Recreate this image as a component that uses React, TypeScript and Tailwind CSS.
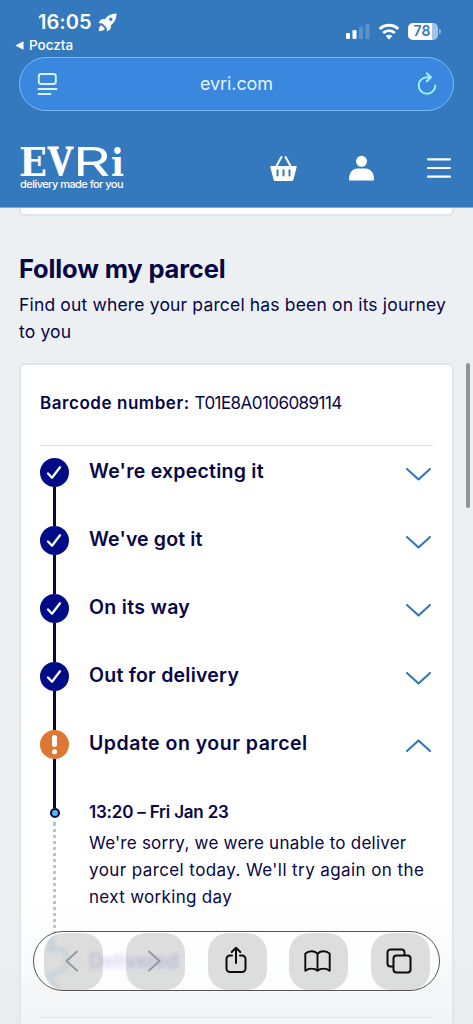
import { type ReactNode } from "react";

const STEPS = [
  { title: "We're expecting it", tracking: "tracking-[0.240px]" },
  { title: "We've got it", tracking: "tracking-[0.150px]" },
  { title: "On its way", tracking: "tracking-[0.320px]" },
  { title: "Out for delivery", tracking: "tracking-[0.230px]" },
];

function StatusBar() {
  return (
    <div className="flex h-[54px] items-start justify-between pl-[15px] pr-[32px] text-white">
      <div>
        <div className="flex items-center gap-[6px] pl-[23px] pt-[9px]">
          <span className="text-[20px] font-semibold leading-[26px] tracking-[0.050px]">16:05</span>
          <svg className="h-[19px] w-[19px]" viewBox="0 0 19 19" fill="currentColor">
            <path fillRule="evenodd" d="M18.5.5c-5-.2-9 2-11.500 5.500L3 6.600.5 10l4 .6L8.500 14.500l.6 4L12.500 16l.6-4C16.600 9.500 18.700 5.500 18.500.5ZM12.800 4.500a1.700 1.700 0 1 1 0 3.400 1.700 1.700 0 0 1 0-3.400Z" />
            <path d="M3.500 12.200C1.500 13 .8 15 .8 18.200c3.200 0 5.200-.7 6-2.700Z" />
          </svg>
        </div>
        <div className="flex items-center gap-[5px] text-[13.500px] font-medium leading-[20px]">
          <svg className="h-[9px] w-[9px]" viewBox="0 0 9 9" fill="currentColor">
            <path d="M8.500.3v8.400L.3 4.500Z" />
          </svg>
          Poczta
        </div>
      </div>
      <div className="flex items-center gap-[8px] pt-[22px]">
        <svg className="h-[18px] w-[24px]" viewBox="0 0 24 18" fill="currentColor">
          <rect x="0" y="11" width="4" height="6" rx="1.200" />
          <rect x="6.500" y="8" width="4" height="9" rx="1.200" />
          <rect x="13" y="5" width="4" height="12" rx="1.200" opacity=".2" />
          <rect x="19.500" y="2" width="4" height="15" rx="1.200" opacity=".2" />
        </svg>
        <svg className="h-[18px] w-[22px]" viewBox="0 0 22 18" fill="none" stroke="currentColor" strokeWidth="2.900">
          <path d="M1.700 7a13.300 13.300 0 0 1 18.600 0" />
          <path d="M5.200 11a8.300 8.300 0 0 1 11.600 0" />
          <path d="M11 17.500l-3.300-3.400a4.500 4.500 0 0 1 6.600 0Z" fill="currentColor" stroke="none" />
        </svg>
        <div className="flex items-center gap-[1px]">
          <div className="flex h-[17px] w-[30px] items-center justify-center rounded-[5px] bg-linear-to-r from-white from-80% to-[#a4c4e4] to-80% pr-[2px] text-[14px] font-semibold leading-none text-[#3478be]">
            78
          </div>
          <div className="h-[5px] w-[2px] rounded-r-full bg-[#8db6df]" />
        </div>
      </div>
    </div>
  );
}

function AddressBar() {
  return (
    <div className="mx-[19px] mt-[3px] flex h-[54px] items-center justify-between rounded-full border border-[#75bdf7] bg-[#3a87df] pl-[17px] pr-[16px]">
      <svg className="h-[24px] w-[21px]" viewBox="0 0 21 24" fill="none" stroke="#d9f4ff" strokeWidth="1.900" strokeLinecap="round">
        <rect x="1.800" y="2" width="17" height="10" rx="2.200" />
        <path d="M1.500 17h18M1.500 22h12" />
      </svg>
      <span className="pr-[2px] text-[18px] leading-none tracking-[-0.100px] text-[#e4f3ff]">evri.com</span>
      <svg className="h-[24px] w-[20px]" viewBox="0 0 20 24" fill="none" stroke="#9ff0fb" strokeWidth="2" strokeLinecap="round" strokeLinejoin="round">
        <path d="M18.300 13.500a8.300 8.300 0 1 1-8.300-8.300h3.500" />
        <path d="M9.800 1.200l4 4-4 4.100" />
      </svg>
    </div>
  );
}

function Logo() {
  return (
    <svg className="h-[60px] w-[106px] overflow-visible" viewBox="0 0 106 60" fill="#fff">
      <text x="-1" y="37.500" fontFamily="DejaVu Serif, serif" fontWeight="700" fontSize="40" textLength="28" lengthAdjust="spacingAndGlyphs">E</text>
      <text x="27.500" y="37" fontFamily="Liberation Serif, serif" fontWeight="700" fontSize="43" textLength="26" lengthAdjust="spacingAndGlyphs" stroke="#fff" strokeWidth="1">V</text>
      <text x="53" y="37.500" fontFamily="Inter, sans-serif" fontWeight="400" fontSize="40" textLength="37.500" lengthAdjust="spacingAndGlyphs">R</text>
      <text x="91" y="37.500" fontFamily="DejaVu Serif, serif" fontWeight="700" fontSize="38" textLength="13" lengthAdjust="spacingAndGlyphs">i</text>
      <text x="0" y="49.500" fontFamily="Inter, sans-serif" fontWeight="500" fontSize="11" textLength="103.500">delivery made for you</text>
    </svg>
  );
}

function SiteHeader() {
  return (
    <div className="flex h-[95px] items-center justify-between pl-5 pr-[21px] pt-[18px] text-white">
      <Logo />
      <div className="flex items-center gap-[51px] pt-[1px]">
        <svg className="h-[26px] w-[27px]" viewBox="0 0 27 26" fill="currentColor">
          <path fillRule="evenodd" d="M1 11h25c.5 0 .8.400.7.900l-3.200 12.600c-.2.900-.8 1.500-1.700 1.500H5.200c-.9 0-1.500-.6-1.700-1.500L.3 11.900c-.1-.5.200-.9.700-.9Zm5.500 4.200v5.400a1 1 0 0 0 2 0v-5.400a1 1 0 0 0-2 0Zm6 0v5.400a1 1 0 0 0 2 0v-5.400a1 1 0 0 0-2 0Zm6 0v5.400a1 1 0 0 0 2 0v-5.400a1 1 0 0 0-2 0Z" />
          <path d="M6.500 11l5-9M20.500 11l-5-9" stroke="currentColor" strokeWidth="2" strokeLinecap="round" />
        </svg>
        <svg className="h-[26px] w-[27px]" viewBox="0 0 27 26" fill="currentColor">
          <circle cx="13.500" cy="6.300" r="5.500" />
          <path d="M1 24.500C1 17.500 4.500 13.500 9.500 13.500h8C22.500 13.500 26 17.500 26 24.500c0 .7-.4 1-1 1H2c-.6 0-1-.3-1-1Z" />
        </svg>
        <svg className="h-[22px] w-[26px]" viewBox="0 0 26 22" stroke="currentColor" strokeWidth="2.200" strokeLinecap="round">
          <path d="M2 2.300h22M2 11h22M2 19.700h22" />
        </svg>
      </div>
    </div>
  );
}

function Chevron({ up = false }: { up?: boolean }) {
  return (
    <svg className="h-[16px] w-[27px]" viewBox="0 0 27 16" fill="none" stroke="#2f78bf" strokeWidth="2.100" strokeLinecap="round" strokeLinejoin="round">
      <path d={up ? "M2 13l11.500-10.500L25 13" : "M2 3l11.500 10.500L25 3"} />
    </svg>
  );
}

function Step({ icon, title, tracking, up = false }: { icon: ReactNode; title: string; tracking: string; up?: boolean }) {
  return (
    <div className="flex h-[68px]">
      <div className="flex w-[29px] flex-col items-center">
        {icon}
        <div className="w-[2.500px] flex-1 bg-[#07073f]" />
      </div>
      <div className="flex h-[29px] flex-1 items-center justify-between pl-5 pr-[1px]">
        <h3 className={`pb-[3px] text-[19.500px] font-semibold leading-[26px] ${tracking}`}>{title}</h3>
        <div className="pt-[2px]"><Chevron up={up} /></div>
      </div>
    </div>
  );
}

function Tick() {
  return (
    <svg className="h-[29px] w-[29px] shrink-0" viewBox="0 0 29 29">
      <circle cx="14.500" cy="14.500" r="14.500" fill="#000b86" />
      <path d="M8 15.500l4 4.200L20 9.300" fill="none" stroke="#fff" strokeWidth="2.300" strokeLinecap="round" strokeLinejoin="round" />
    </svg>
  );
}

function Alert() {
  return (
    <svg className="h-[29px] w-[29px] shrink-0" viewBox="0 0 29 29">
      <circle cx="14.500" cy="14.500" r="14.500" fill="#dc7832" />
      <path d="M14.500 7.500v7" stroke="#fff" strokeWidth="5" strokeLinecap="round" />
      <circle cx="14.500" cy="21.800" r="2.500" fill="#fff" />
    </svg>
  );
}

function ToolButton({ children }: { children: ReactNode }) {
  return (
    <button className="flex h-[57px] w-[59px] items-center justify-center rounded-[20px] bg-black/13 pr-[3px]">{children}</button>
  );
}

function Toolbar() {
  return (
    <div className="absolute left-[33px] top-[931px] flex h-[60px] w-[407px] items-center justify-between rounded-full border border-[#555] bg-white/75 pl-[10px] pr-[9px] backdrop-blur-[2px]">
      <ToolButton>
        <svg className="h-[22px] w-[14px]" viewBox="0 0 14 22" fill="none" stroke="#98989d" strokeWidth="2" strokeLinecap="round" strokeLinejoin="round">
          <path d="M12 1.500L1.500 11 12 20.500" />
        </svg>
      </ToolButton>
      <ToolButton>
        <svg className="h-[22px] w-[14px]" viewBox="0 0 14 22" fill="none" stroke="#98989d" strokeWidth="2" strokeLinecap="round" strokeLinejoin="round">
          <path d="M2 1.500L12.500 11 2 20.500" />
        </svg>
      </ToolButton>
      <ToolButton>
        <svg className="mb-[2px] h-[28px] w-[22px]" viewBox="0 0 22 28" fill="none" stroke="#0b0b0b" strokeWidth="2" strokeLinecap="round" strokeLinejoin="round">
          <path d="M7 9.500H5a3.500 3.500 0 0 0-3.500 3.500v9.500A3.500 3.500 0 0 0 5 26h12a3.500 3.500 0 0 0 3.500-3.500V13A3.500 3.500 0 0 0 17 9.500h-2" />
          <path d="M11 17V1.800M6.700 6L11 1.700 15.300 6" />
        </svg>
      </ToolButton>
      <ToolButton>
        <svg className="h-[22px] w-[27px]" viewBox="0 0 27 22" fill="none" stroke="#0b0b0b" strokeWidth="1.900" strokeLinejoin="round">
          <path d="M13.500 4C12 2 10 1.200 7.500 1.200S3 2 1.300 3.700V20.700C3 19.300 5 18.600 7.500 18.600s4.500.7 6 2.100c1.500-1.400 3.500-2.100 6-2.100s4.500.7 6.200 2.100V3.700C24 2 22 1.200 19.500 1.200S15 2 13.500 4ZM13.500 4v16.700" />
        </svg>
      </ToolButton>
      <ToolButton>
        <svg className="h-[26px] w-[26px]" viewBox="0 0 26 26" fill="none" stroke="#0b0b0b" strokeWidth="2" strokeLinejoin="round">
          <rect x="7.500" y="7.500" width="17" height="17" rx="3" />
          <path d="M7.500 18.500H4.500a3 3 0 0 1-3-3v-11a3 3 0 0 1 3-3h11a3 3 0 0 1 3 3v3" />
        </svg>
      </ToolButton>
    </div>
  );
}

export default function App() {
  return (
    <div className="relative h-[1024px] w-full overflow-hidden bg-[#ecf0f3] font-['Inter',sans-serif] text-[#070646]">
      <header className="h-[208px] border-b border-[#6faee6] bg-[#3478be]">
        <StatusBar />
        <AddressBar />
        <SiteHeader />
      </header>

      <main className="px-[19px]">
        <div className="h-[8px] rounded-b-[5px] border-2 border-t-0 border-[#dfe6eb] bg-white" />

        <h2 className="mt-[37px] text-[25.500px] font-bold leading-[32px] tracking-[-0.150px]">Follow my parcel</h2>
        <p className="mt-[6px] whitespace-nowrap text-[17.500px] leading-[27px] tracking-[0.160px]">
          Find out where your parcel has been on its journey
          <br />
          to you
        </p>

        <section className="mt-[18px] h-[700px] rounded-[6px] border-2 border-[#dfe6eb] bg-white px-[19px]">
          <p className="border-b border-[#cfe0ee] pb-[28px] pt-[25px] text-[17px] leading-[27px]">
            <span className="font-semibold tracking-[0.550px]">Barcode number:</span>{" "}
            <span className="tracking-[-0.550px]">T01E8A0106089114</span>
          </p>

          <div className="pt-[12px]">
            {STEPS.map((s) => (
              <Step key={s.title} icon={<Tick />} title={s.title} tracking={s.tracking} />
            ))}
            <Step icon={<Alert />} title="Update on your parcel" tracking="tracking-[0.500px]" up />
          </div>

          <div className="flex h-[150px]">
            <div className="flex w-[29px] flex-col items-center">
              <div className="h-[9.500px] w-[2.500px] bg-[#07073f]" />
              <div className="h-[10px] w-[10px] shrink-0 rounded-full border-[2.500px] border-[#07073f] bg-[#59b9f0]" />
              <div className="mt-[4px] w-0 flex-1 border-l-[3px] border-dotted border-[#9fcbe3]" />
            </div>
            <div className="pl-5 pt-[1px]">
              <h4 className="text-[17px] font-semibold leading-[27px] tracking-[-0.200px]">13:20 – Fri Jan 23</h4>
              <p className="mt-[4px] whitespace-nowrap text-[17px] leading-[27px]">
                <span className="tracking-[0.240px]">We're sorry, we were unable to deliver</span>
                <br />
                <span className="tracking-[0.410px]">your parcel today. We'll try again on the</span>
                <br />
                <span className="tracking-[0.320px]">next working day</span>
              </p>
            </div>
          </div>

          <div className="flex h-[70px] items-start border-b border-[#cfe0ee]">
            <svg className="-mt-[14px] h-[56px] w-[29px]" viewBox="0 0 29 56" fill="none" stroke="#4fb4e8" strokeWidth="4" strokeLinecap="round">
              <path d="M10 3c2 6 2 9 0 13 8-3 15-1 17 6 2 9-3 16-14 17-5 1-4 5 4 13" />
            </svg>
            <h3 className="pl-5 text-[19.500px] font-semibold leading-[26px] text-[#3a28d0]">Delivered</h3>
          </div>
        </section>
      </main>

      <div className="absolute right-[3px] top-[363px] h-[145px] w-[4px] rounded-full bg-[#919496]" />
      <div className="absolute inset-x-0 bottom-0 h-[124px] bg-linear-to-b from-transparent to-[#e6e9eb]/50" />
      <Toolbar />
    </div>
  );
}
